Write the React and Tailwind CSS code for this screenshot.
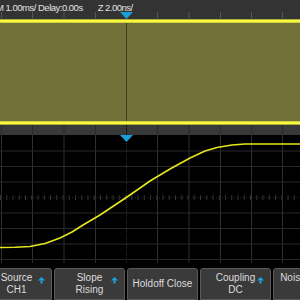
import React from 'react';

const FONT = { fontFamily: '"Liberation Sans", Arial, sans-serif' };

const gridX = [1, 32, 63.5, 95, 126, 157, 188.5, 220, 251, 282];
const gridY = [15.5, 31, 46.5, 62, 77.5, 93, 108.5, 124];

// rough shape of the zoomed rising edge (x, y in the zoom window)
const wave = [
  [0, 112.5], [15, 112.3], [30, 111.5], [45, 108.5], [60, 103], [72, 97],
  [83, 90], [100, 80], [115, 70], [127, 62], [140, 53], [150, 46],
  [170, 34], [190, 23], [205, 16], [217, 12.5], [232, 10], [245, 9], [300, 9],
];

const Marker = ({ className }) => (
  <svg width="13" height="7" viewBox="0 0 13 7" className={className}>
    <polygon points="0,0 13,0 6.5,7" fill="#1a9ed9" />
  </svg>
);

const UpArrow = () => (
  <svg width="7" height="7" viewBox="0 0 7 7" className="absolute right-[6px] top-[8px]">
    <polygon points="3.5,0 7,3.5 0,3.5" fill="#1aa3e2" />
    <rect x="2.5" y="3.5" width="2" height="3" fill="#1aa3e2" />
  </svg>
);

const SoftKey = ({ top, bottom, arrow }) => (
  <div className="relative w-[71px] h-[32px] shrink-0 rounded-t-[3px] border border-[#5a5a5a] bg-[#3a3a3a] text-[#dcdcdc] text-[10px] leading-[11px] flex flex-col items-center justify-start pt-[3px]">
    {bottom ? (
      <>
        <span>{top}</span>
        <span className="mt-[1px]">{bottom}</span>
      </>
    ) : (
      <span className="mt-[6px]">{top}</span>
    )}
    {arrow && <UpArrow />}
  </div>
);

export default function App() {
  return (
    <div className="w-[300px] h-[300px] overflow-hidden bg-black flex flex-col" style={FONT}>
      {/* status bar */}
      <div className="relative h-[19px] bg-[#333333] text-[#e2e2e2] text-[9.5px] tracking-[-0.5px] flex items-start pt-[1px]">
        <span className="ml-[-4px] whitespace-nowrap">M 1.00ms/ Delay:0.00s</span>
        <span className="ml-[15px] whitespace-nowrap">Z 2.00ns/</span>
        <svg width="300" height="19" className="absolute left-0 top-0">
          {gridX.map((x) => (
            <line key={x} x1={x + 0.5} x2={x + 0.5} y1="12" y2="18" stroke="#585858" strokeWidth="1" />
          ))}
        </svg>
        <Marker className="absolute left-[120px] top-[12px]" />
      </div>

      {/* main window, zoomed region */}
      <div className="h-[1px] bg-[#b0b032]" />
      <div className="h-[2px] bg-[#f8f842]" />
      <div className="h-[1px] bg-[#d2d23c]" />
      <div className="relative h-[100px] bg-[#717139]">
        <div className="absolute left-[126px] top-0 h-full w-[1px] bg-[#3e3e18]" />
      </div>
      <div className="h-[1px] bg-[#d2d23c]" />
      <div className="h-[2px] bg-[#f8f842]" />
      <div className="h-[1px] bg-[#b0b032]" />

      {/* separator */}
      <div className="relative h-[10px] bg-[#393939]">
        <svg width="300" height="10" className="absolute left-0 top-0">
          {gridX.map((x) => (
            <line key={x} x1={x + 0.5} x2={x + 0.5} y1="0" y2="10" stroke="#2a2a2a" strokeWidth="1" />
          ))}
          <line x1="126.5" x2="126.5" y1="0" y2="10" stroke="#111" strokeDasharray="2 1" />
        </svg>
      </div>

      {/* zoom window */}
      <div className="relative h-[128px] bg-black">
        <svg width="300" height="128" className="absolute left-0 top-0">
          {gridX.map((x) => (
            <line key={'v' + x} x1={x + 0.5} x2={x + 0.5} y1="0" y2="128" stroke="#2e2e2e" strokeWidth="1" strokeDasharray={x === 126 ? '1 1' : undefined} />
          ))}
          {gridY.map((y) => (
            <line key={'h' + y} x1="0" x2="300" y1={y + 0.5} y2={y + 0.5} stroke="#282828" strokeWidth="1" strokeDasharray={y === 62 ? '1 2' : undefined} />
          ))}
          {Array.from({ length: 50 }, (_, i) => i * 6.25).map((x) => (
            <line key={'t' + x} x1={x + 0.5} x2={x + 0.5} y1="60" y2="65" stroke="#333" strokeWidth="1" />
          ))}
          <polyline
            points={wave.map((p) => p.join(',')).join(' ')}
            fill="none"
            stroke="#e6e61e"
            strokeWidth="1.6"
            strokeLinejoin="round"
          />
        </svg>
        <Marker className="absolute left-[120px] top-0" />
      </div>

      {/* soft keys */}
      <div className="mt-[7px] ml-[-19px] flex gap-[2px]">
        <SoftKey top="Source" bottom="CH1" arrow />
        <SoftKey top="Slope" bottom="Rising" arrow />
        <SoftKey top="Holdoff Close" />
        <SoftKey top="Coupling" bottom="DC" arrow />
        <SoftKey top="Noise Reject" bottom="Off" />
      </div>
    </div>
  );
}
